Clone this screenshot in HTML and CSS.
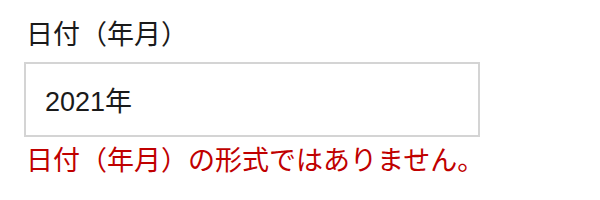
FILE: index.html
```html
<!DOCTYPE html>
<html lang="ja">
<head>
<meta charset="utf-8">
<link rel="stylesheet" href="styles.css">
</head>
<body>
<div class="field">
  <label class="label" for="ym">日付（年月）</label>
  <input class="input" id="ym" type="text" value="2021年">
  <p class="error">日付（年月）の形式ではありません。</p>
</div>
</body>
</html>
```
FILE: styles.css
```css
html, body {
  margin: 0;
  padding: 0;
  background: #fff;
}
body {
  font-family: "Liberation Sans", "Noto Sans CJK JP", sans-serif;
  color: #1a1a1a;
}
.field {
  display: flex;
  flex-direction: column;
  align-items: flex-start;
  padding: 17px 0 0 24px;
}
.label {
  font-size: 27px;
  line-height: 36px;
  margin-left: 2px;
}
.input {
  box-sizing: border-box;
  margin-top: 9px;
  width: 456px;
  height: 75px;
  border: 2px solid #d4d4d4;
  border-radius: 0;
  padding: 0 19px;
  font-family: inherit;
  font-size: 27px;
  color: #1a1a1a;
  outline: none;
}
.error {
  margin: 6px 0 0 2px;
  font-size: 27px;
  line-height: 36px;
  color: #c00000;
}
```
